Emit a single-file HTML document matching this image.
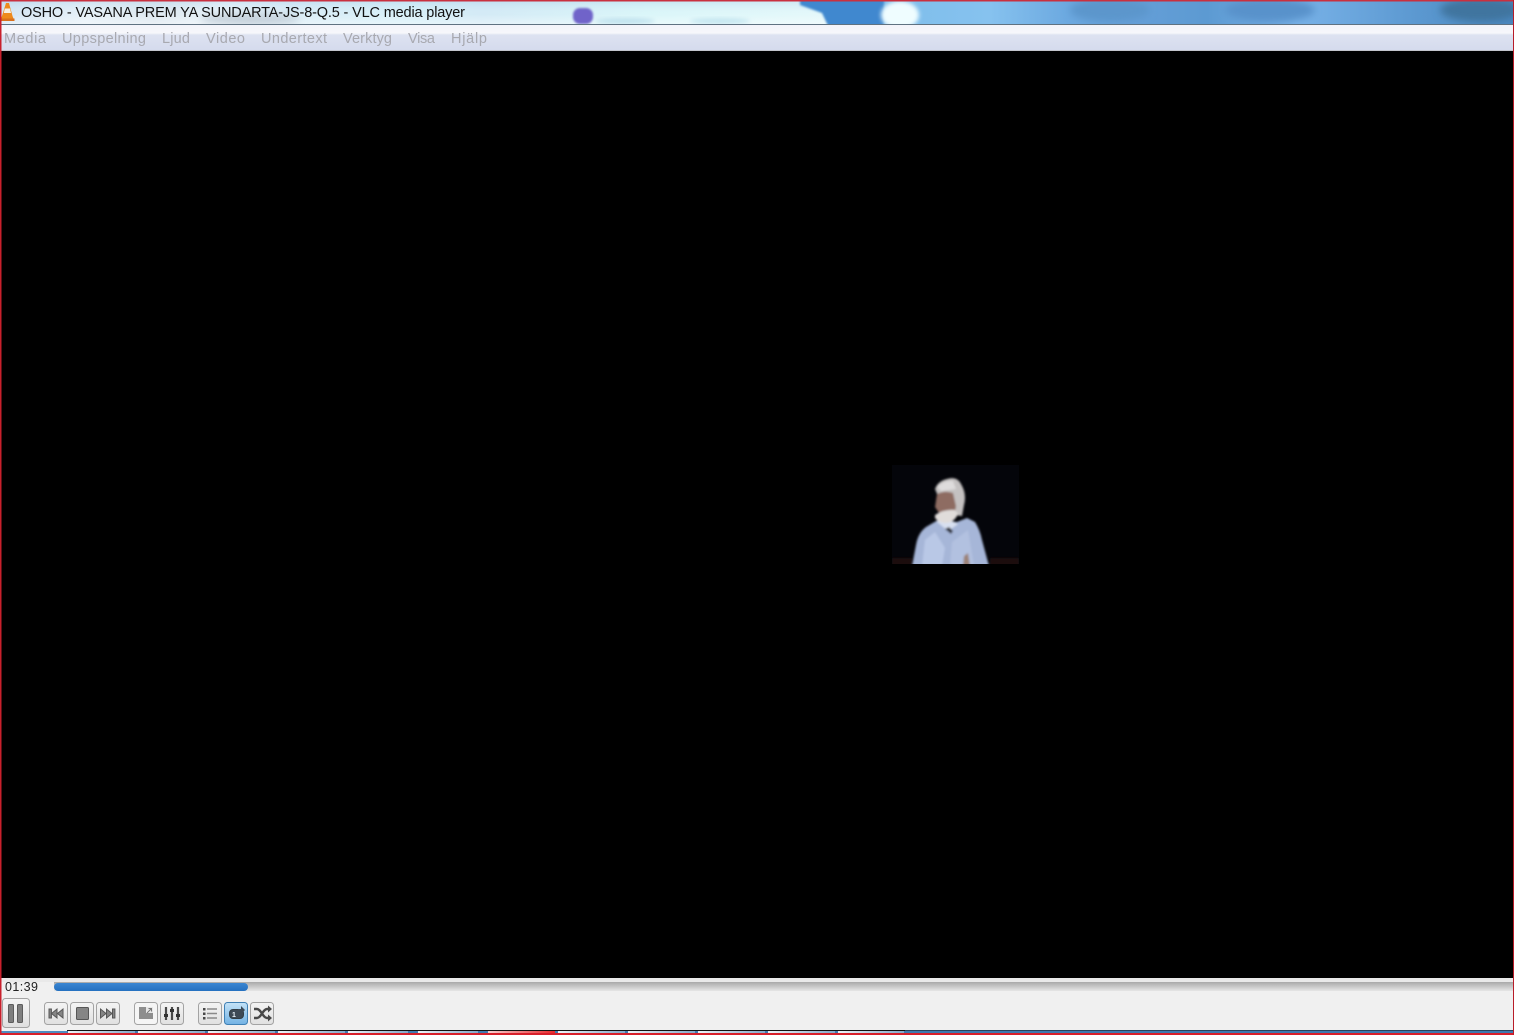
<!DOCTYPE html>
<html lang="sv">
<head>
<meta charset="utf-8">
<title>OSHO - VASANA PREM YA SUNDARTA-JS-8-Q.5 - VLC media player</title>
<style>
html,body{margin:0;padding:0;width:1514px;height:1035px;overflow:hidden;background:#000}
svg{display:block}
text{font-family:"Liberation Sans",sans-serif}
.m{font-size:14.5px;fill:#a8a9b0}
.b{stroke:#a3a3a3;stroke-width:1}
.i{fill:#858585;stroke:#565656;stroke-width:1}
</style>
</head>
<body>
<svg width="1514" height="1035" viewBox="0 0 1514 1035" xmlns="http://www.w3.org/2000/svg">
<defs>
<linearGradient id="tb" x1="0" x2="1" y1="0" y2="0">
<stop offset="0" stop-color="#cfe2f2"/>
<stop offset=".1" stop-color="#e3eff7"/>
<stop offset=".18" stop-color="#d9e5ee"/>
<stop offset=".26" stop-color="#e6f2f9"/>
<stop offset=".34" stop-color="#d6ebf6"/>
<stop offset=".48" stop-color="#d2eef7"/>
<stop offset=".56" stop-color="#cfe8f5"/>
<stop offset=".75" stop-color="#d6f5f8"/>
<stop offset="1" stop-color="#e4f8fa"/>
</linearGradient>
<linearGradient id="tbv" x1="0" x2="0" y1="0" y2="1">
<stop offset="0" stop-color="#9fc8e8" stop-opacity=".35"/>
<stop offset=".6" stop-color="#ffffff" stop-opacity=".1"/>
<stop offset="1" stop-color="#ffffff" stop-opacity=".45"/>
</linearGradient>
<linearGradient id="tb2" x1="0" x2="1" y1="0" y2="0">
<stop offset="0" stop-color="#7dbdea"/>
<stop offset=".18" stop-color="#86c2ef"/>
<stop offset=".3" stop-color="#6ca9e0"/>
<stop offset=".4" stop-color="#659fd8"/>
<stop offset=".52" stop-color="#5c9ad2"/>
<stop offset=".66" stop-color="#78b2e8"/>
<stop offset=".85" stop-color="#5b98d0"/>
<stop offset="1" stop-color="#4a88c0"/>
</linearGradient>
<linearGradient id="mn" x1="0" x2="0" y1="0" y2="1">
<stop offset="0" stop-color="#f3f4fa"/>
<stop offset=".32" stop-color="#f6f7fb"/>
<stop offset=".4" stop-color="#dde2f1"/>
<stop offset="1" stop-color="#d5dbed"/>
</linearGradient>
<linearGradient id="track" x1="0" x2="0" y1="0" y2="1">
<stop offset="0" stop-color="#a9a9a9"/>
<stop offset="1" stop-color="#e6e6e6"/>
</linearGradient>
<linearGradient id="seek" x1="0" x2="0" y1="0" y2="1">
<stop offset="0" stop-color="#3a86d2"/>
<stop offset="1" stop-color="#2470c0"/>
</linearGradient>
<linearGradient id="btn" x1="0" x2="0" y1="0" y2="1">
<stop offset="0" stop-color="#f4f4f4"/>
<stop offset="1" stop-color="#e0e0e0"/>
</linearGradient>
<linearGradient id="btnb" x1="0" x2="0" y1="0" y2="1">
<stop offset="0" stop-color="#c5e3f7"/>
<stop offset="1" stop-color="#72b2e4"/>
</linearGradient>
<linearGradient id="tab" x1="0" x2="1" y1="0" y2="0">
<stop offset="0" stop-color="#eef3f8"/>
<stop offset="1" stop-color="#84a9ca"/>
</linearGradient>
<linearGradient id="tabr" x1="0" x2="1" y1="0" y2="0">
<stop offset="0" stop-color="#f6d0d0"/>
<stop offset="1" stop-color="#e8282c"/>
</linearGradient>
<filter id="bl" x="-20%" y="-20%" width="140%" height="140%"><feGaussianBlur stdDeviation="1"/></filter>
<filter id="bl2" x="-30%" y="-30%" width="160%" height="160%"><feGaussianBlur stdDeviation="2.2"/></filter>
<filter id="bl3" x="-40%" y="-60%" width="180%" height="220%"><feGaussianBlur stdDeviation="4"/></filter>
<filter id="s"><feGaussianBlur stdDeviation=".35"/></filter>
<clipPath id="tc"><rect x="0" y="1" width="1514" height="23"/></clipPath>
<clipPath id="vc"><rect x="892" y="465" width="127" height="99"/></clipPath>
</defs>

<rect width="1514" height="1035" fill="#000"/>

<!-- title bar -->
<g clip-path="url(#tc)">
<rect x="0" y="0" width="860" height="24" fill="url(#tb)"/>
<rect x="0" y="0" width="860" height="24" fill="url(#tbv)"/>
<rect x="875" y="0" width="639" height="24" fill="url(#tb2)"/>
<path d="M800 -6 H884 V30 H830 L822 13 L800 5 Z" fill="#4088cf" filter="url(#bl)"/>
<ellipse cx="900" cy="15" rx="19" ry="14" fill="#effdff" filter="url(#bl2)"/>
<rect x="573" y="8" width="20" height="16" rx="7" fill="#6f63c9" filter="url(#bl)"/>
<ellipse cx="250" cy="19" rx="50" ry="6" fill="#c4d0da" filter="url(#bl3)"/>
<ellipse cx="625" cy="21" rx="30" ry="3" fill="#c0e2ee" filter="url(#bl2)"/>
<ellipse cx="720" cy="21" rx="30" ry="3" fill="#c4e6f0" filter="url(#bl2)"/>
<ellipse cx="1110" cy="10" rx="40" ry="12" fill="#5b96cc" filter="url(#bl3)"/>
<ellipse cx="1270" cy="10" rx="45" ry="12" fill="#5892cb" filter="url(#bl3)"/>
<ellipse cx="1480" cy="10" rx="40" ry="12" fill="#41759f" filter="url(#bl3)"/>
</g>
<rect x="0" y="0" width="1514" height="1.5" fill="#c9303f"/>
<rect x="0" y="24" width="1514" height="1" fill="#5f7281"/>

<!-- cone -->
<g filter="url(#s)">
<path d="M6 3 L9 3 L12.5 16 L14.5 21 L0 21 L2 16 Z" fill="#ee8a1e"/>
<path d="M4.8 8.5 L10 8.5 L11 13 L3.8 13 Z" fill="#f7efe2"/>
<rect x="0" y="18.5" width="14.5" height="2.5" fill="#d9701a"/>
</g>

<text x="21" y="17" font-size="14.5" fill="#111" textLength="444" lengthAdjust="spacing">OSHO - VASANA PREM YA SUNDARTA-JS-8-Q.5 - VLC media player</text>

<!-- menu bar -->
<rect x="0" y="25" width="1514" height="25" fill="url(#mn)"/>
<rect x="0" y="50" width="1514" height="1" fill="#c3c5cc"/>
<text class="m" x="4" y="43" textLength="42" lengthAdjust="spacing">Media</text>
<text class="m" x="62" y="43" textLength="84" lengthAdjust="spacing">Uppspelning</text>
<text class="m" x="162" y="43" textLength="28" lengthAdjust="spacing">Ljud</text>
<text class="m" x="206" y="43" textLength="39" lengthAdjust="spacing">Video</text>
<text class="m" x="261" y="43" textLength="66" lengthAdjust="spacing">Undertext</text>
<text class="m" x="343" y="43" textLength="49" lengthAdjust="spacing">Verktyg</text>
<text class="m" x="408" y="43" textLength="27" lengthAdjust="spacing">Visa</text>
<text class="m" x="451" y="43" textLength="36" lengthAdjust="spacing">Hjälp</text>

<!-- video -->
<rect x="892" y="465" width="127" height="99" fill="#04050a"/>
<g clip-path="url(#vc)">
<rect x="892" y="558" width="20" height="8" fill="#1c0c08" filter="url(#bl)"/>
<rect x="990" y="558" width="29" height="8" fill="#1c0c08" filter="url(#bl)"/>
<g filter="url(#bl)">
<!-- shirt -->
<path d="M912 566 L916 545 Q918 533 926 527 L938 520 L957 522 L967 518 L975 522 Q980 530 982 540 L989 566 Z" fill="#a6b6d8"/>
<path d="M922 566 L925 540 L935 532 L945 548 L942 566 Z" fill="#b9c8e6"/>
<path d="M950 566 L952 542 L968 530 L974 566 Z" fill="#b2c1e0"/>
<path d="M936 521 L948 531 L958 524 L950 520 Z" fill="#d8e0f0"/>
<path d="M945 529 L951 534 L953 531 L949 527 Z" fill="#2f313b"/>
<path d="M963 566 L964 556 L968 553 L970 566 Z" fill="#9c8378"/>
<!-- hair -->
<path d="M935 489 Q938 481 947 479 Q957 476 961 484 Q967 494 964 505 L962 516 L954 515 L950 498 L938 496 Z" fill="#c4c1c1"/>
<path d="M937 487 Q944 480 953 481 L956 489 L941 491 Z" fill="#dedcdc"/>
<!-- face -->
<path d="M937 494 Q945 490 953 493 L956 506 L955 513 L939 513 L935 507 Z" fill="#8e6c62"/>
<!-- beard -->
<path d="M935 515 Q944 509 955 510 L958 514 Q954 523 945 523 Q938 522 935 518 Z" fill="#e0dcda"/>
</g>
</g>

<!-- controls -->
<rect x="0" y="978" width="1514" height="53" fill="#f0f0f0"/>
<rect x="0" y="978" width="1514" height="4" fill="#e9e9e9"/>
<rect x="54" y="982" width="1460" height="9" fill="url(#track)"/>
<rect x="54" y="983" width="194" height="8" rx="4" fill="url(#seek)"/>
<text x="5" y="991" font-size="12.5" fill="#222" textLength="33" lengthAdjust="spacing">01:39</text>

<g filter="url(#s)">
<!-- pause -->
<rect class="b" x="2.5" y="998.5" width="27" height="29" rx="3" fill="url(#btn)"/>
<rect x="8.5" y="1004.5" width="5" height="18" rx="1" fill="#7e7e7e" stroke="#5c5c5c"/>
<rect x="17.5" y="1004.5" width="5" height="18" rx="1" fill="#7e7e7e" stroke="#5c5c5c"/>

<!-- prev -->
<rect class="b" x="44.5" y="1002.5" width="23" height="22" rx="3" fill="url(#btn)"/>
<rect class="i" x="49" y="1009" width="2.4" height="9"/>
<path class="i" d="M57 1009 V1018 L51.5 1013.5 Z"/>
<path class="i" d="M63 1009 V1018 L57.5 1013.5 Z"/>
<!-- stop -->
<rect class="b" x="70.5" y="1002.5" width="23" height="22" rx="3" fill="url(#btn)"/>
<rect class="i" x="76.5" y="1007.5" width="12" height="12" rx="1"/>
<!-- next -->
<rect class="b" x="96.5" y="1002.5" width="23" height="22" rx="3" fill="url(#btn)"/>
<path class="i" d="M100.5 1009 V1018 L106 1013.5 Z"/>
<path class="i" d="M106.5 1009 V1018 L112 1013.5 Z"/>
<rect class="i" x="112.5" y="1009" width="2.4" height="9"/>

<!-- fullscreen -->
<rect class="b" x="134.5" y="1002.5" width="23" height="22" rx="3" fill="#f5f5f5"/>
<rect x="139" y="1007" width="14" height="12" fill="#8e8e8e"/>
<rect x="146" y="1007" width="7" height="6" fill="#e6e6e6"/>
<path d="M147 1013 L151 1009 M148.5 1008.5 H151.5 V1011.5" fill="none" stroke="#777" stroke-width="1"/>

<!-- ext settings -->
<rect class="b" x="160.5" y="1002.5" width="23" height="22" rx="3" fill="url(#btn)"/>
<path d="M166 1007 V1020 M172 1007 V1020 M178 1007 V1020" stroke="#4a4a4a" stroke-width="2.2" fill="none"/>
<rect x="164" y="1014" width="4" height="3" fill="#333"/>
<rect x="170" y="1009" width="4" height="3" fill="#333"/>
<rect x="176" y="1014" width="4" height="3" fill="#333"/>

<!-- playlist -->
<rect class="b" x="198.5" y="1002.5" width="23" height="22" rx="3" fill="url(#btn)"/>
<path d="M207 1009 H217 M207 1013.5 H217 M207 1018 H217" stroke="#8a8a8a" stroke-width="1.4"/>
<rect x="203" y="1008" width="2.5" height="2.5" fill="#4a4a4a"/>
<rect x="203" y="1012.5" width="2.5" height="2.5" fill="#4a4a4a"/>
<rect x="203" y="1017" width="2.5" height="2.5" fill="#4a4a4a"/>

<!-- loop -->
<rect x="224.5" y="1002.5" width="23" height="22" rx="3" fill="url(#btnb)" stroke="#3f80b4"/>
<rect x="229.5" y="1009.5" width="14" height="9" rx="3.5" fill="#3d4a55" stroke="#333c44"/>
<path d="M238 1009 H241 V1006 L245 1010 L241 1014 V1011 H238 Z" fill="#3d4a55"/>
<text x="232" y="1017" font-size="7" font-weight="bold" fill="#e8f2fa">1</text>

<!-- random -->
<rect class="b" x="250.5" y="1002.5" width="23" height="22" rx="3" fill="url(#btn)"/>
<path d="M254 1009 H257 C261 1009 263 1018 267 1018 H269 M254 1018 H257 C261 1018 263 1009 267 1009 H269" fill="none" stroke="#4a4a4a" stroke-width="2.4"/>
<path d="M268 1005.5 L272 1009 L268 1012.5 Z M268 1014.5 L272 1018 L268 1021.5 Z" fill="#4a4a4a"/>
</g>

<!-- taskbar strip -->
<rect x="0" y="1031" width="1514" height="2" fill="#3f7ab0"/>
<rect x="0" y="1031" width="67" height="2" fill="#4f8cc0"/>
<rect x="67" y="1030" width="838" height="1" fill="#111"/>
<rect x="905" y="1030" width="609" height="1" fill="#27445e"/>
<rect x="68" y="1031" width="67" height="2" fill="url(#tab)"/>
<rect x="138" y="1031" width="67" height="2" fill="url(#tab)"/>
<rect x="208" y="1031" width="67" height="2" fill="url(#tab)"/>
<rect x="278" y="1031" width="67" height="2" fill="url(#tab)"/>
<rect x="348" y="1031" width="60" height="2" fill="url(#tab)"/>
<rect x="418" y="1031" width="60" height="2" fill="url(#tab)"/>
<rect x="488" y="1031" width="67" height="2" fill="url(#tabr)"/>
<rect x="558" y="1031" width="67" height="2" fill="url(#tab)"/>
<rect x="628" y="1031" width="67" height="2" fill="url(#tab)"/>
<rect x="698" y="1031" width="67" height="2" fill="url(#tab)"/>
<rect x="768" y="1031" width="67" height="2" fill="url(#tab)"/>
<rect x="838" y="1031" width="66" height="2" fill="url(#tab)"/>
<rect x="0" y="1033" width="1514" height="2" fill="#d81f2a"/>

<!-- window red edges -->
<rect x="0" y="0" width="1.5" height="1035" fill="#c8202c"/>
<rect x="1513" y="0" width="1" height="1035" fill="#b81c28"/>
</svg>
</body>
</html>
